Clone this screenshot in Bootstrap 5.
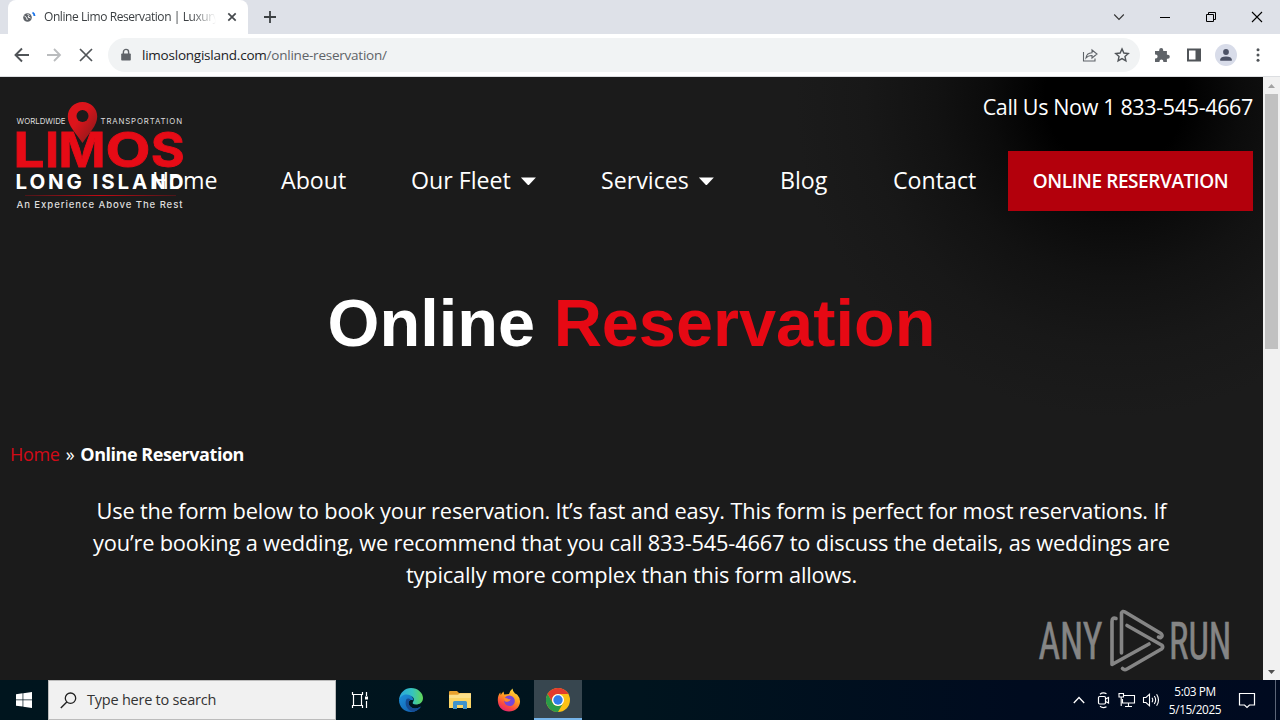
<!DOCTYPE html>
<html lang="en">
<head>
    <meta charset="UTF-8">
    <meta name="viewport" content="width=device-width, initial-scale=1.0">
    <title>Online Limo Reservation | Luxury</title>
    <link href="https://cdn.jsdelivr.net/npm/bootstrap@5.3.0/dist/css/bootstrap.min.css" rel="stylesheet">
    <style>
        body { width: 1280px; height: 720px; font-family: "Open Sans", sans-serif; }
        svg { display: block; flex: none; }

        /* browser */
        .tab-strip { height: 34px; background: #dee1e8; padding-left: 8px; }
        .browser-tab { width: 240px; height: 34px; background: #fff; border-radius: 8px 8px 0 0; padding: 0 9px 0 14px; margin-right: 15px; font-size: 12px; letter-spacing: -.42px; color: #3c4043; }
        .tab-title { width: 172px; margin-left: 7px; -webkit-mask-image: linear-gradient(90deg, #000 85%, transparent); mask-image: linear-gradient(90deg, #000 85%, transparent); }
        .window-buttons { gap: 32px; padding-right: 16px; }
        .toolbar { height: 43px; border-bottom: 1px solid #dcdee1; padding: 0 13px; }
        .forward-icon { margin-left: 15px; }
        .address-bar { width: 1032px; height: 34px; background: #f1f3f4; border-radius: 17px; margin-left: 14px; padding: 0 10px 0 12px; font-size: 13.5px; letter-spacing: -.23px; color: #202124; }
        .address-bar .url { margin-left: 10px; }
        .address-bar .url-path { color: #5f6368; }
        .toolbar-actions { gap: 14px; margin-left: 13px; }
        .side-panel { margin-left: 1px; margin-right: -1px; }
        .avatar { width: 22px; height: 22px; background: #d8dce9; }
        .menu-dots { margin-left: 4px; }

        /* page */
        .viewport-area { height: 603px; background: #1b1b1b; }
        .site { width: 1263px; color: #fff; background: radial-gradient(circle at 1115px 20px, #000 0, #000 70px, #0b0b0b 125px, #121212 180px, #181818 250px, #1b1b1b 320px); }
        .site-header { padding: 13px 10px 0 16px; height: 160px; }
        .logo { margin-top: 11px; }
        .header-side { margin-left: -32px; }
        .phone { font-size: 21.5px; line-height: 34px; letter-spacing: -.35px; }
        .main-menu { grid-template-columns: 129px 130px 190px 179px 113px 115px 245px; margin-top: 27px; height: 60px; font-size: 23.2px; }
        .main-menu a { color: #fff; text-decoration: none; padding-bottom: 2px; }
        .caret { width: 15px; height: 8px; background: #fff; clip-path: polygon(0 0, 100% 0, 50% 100%); margin-left: 10px; margin-top: 3px; }
        .main-menu .btn-reserve { background: #b3000c; height: 60px; padding-bottom: 0; font-size: 19px; font-weight: 600; letter-spacing: -.42px; }
        .hero-title { font: bold 66.7px/80px "Liberation Sans", sans-serif; margin: 46px 0 0; }
        .brand-red { color: #e60914; }
        .crumbs { margin: 76px 0 0 10px; gap: 6px; font-size: 18px; line-height: 30px; letter-spacing: -.3px; }
        .crumbs a { color: #d20a17; text-decoration: none; }
        .crumbs strong { letter-spacing: -.46px; }
        .intro { margin: 26px 0 0; font-size: 21.8px; line-height: 32px; letter-spacing: -.18px; }
        .scroll-track { width: 17px; background: #f1f1f1; padding: 7px 0 6px; }
        .scroll-thumb { width: 13px; height: 255px; background: #c1c1c1; margin-top: 6px; }
        .watermark { position: absolute; right: 48px; top: 608px; }

        /* taskbar */
        .taskbar { height: 40px; background: linear-gradient(90deg, #00151e 0, #00141e 50%, #000b1f 80%, #000a20 100%); color: #fff; }
        .start-button { width: 48px; }
        .search-box { width: 288px; background: #f1f1f1; border: 1px solid #bcbcbc; padding-left: 11px; gap: 10px; font-size: 14.5px; letter-spacing: -.23px; color: #333; }
        .task-view { width: 48px; margin-right: 2px; }
        .task-item { width: 49px; }
        .task-item.is-open { width: 48px; margin-left: 1px; background: #37464f; border-bottom: 2px solid #76b5ea; padding-top: 2px; }
        .tray-camera { margin-left: 12px; }
        .tray-network { margin-left: 7px; }
        .tray-sound { margin-left: 6px; }
        .clock { width: 60px; margin-left: 5px; font-size: 11.8px; line-height: 18px; letter-spacing: -.4px; }
        .notifications { margin: 0 19px 0 13px; }
        .show-desktop { width: 5px; border-left: 1px solid #5c6577; }
    </style>
</head>
<body class="overflow-hidden position-relative">
    <div class="tab-strip d-flex align-items-center">
        <div class="browser-tab d-flex align-items-center">
            <svg width="15" height="14" viewBox="0 0 15 14">
                <circle cx="5.500" cy="7.500" r="4.300" fill="#5f6368"/>
                <path d="M2.500 6l2 1.500.8 2.500M5.500 4l1.500 1.500-1 1.500 2.500 1" stroke="#fff" stroke-width="1" fill="none"/>
                <path d="M10.500 2.500q2 1 2 3.500" stroke="#1a73e8" stroke-width="1.900" fill="none"/>
            </svg>
            <div class="tab-title text-nowrap overflow-hidden">Online Limo Reservation | Luxury</div>
            <svg class="ms-auto" width="14" height="14" viewBox="0 0 14 14"><path d="M3.300 3.300l7.400 7.400M10.700 3.300l-7.400 7.400" stroke="#45494d" stroke-width="1.700"/></svg>
        </div>
        <svg width="14" height="14" viewBox="0 0 14 14"><path d="M7 1v12M1 7h12" stroke="#3c4043" stroke-width="1.800"/></svg>
        <div class="window-buttons d-flex align-items-center ms-auto">
            <svg width="14" height="14" viewBox="0 0 14 14"><path d="M2.200 4.500L7 9.500l4.800-5" stroke="#333" stroke-width="1.100" fill="none"/></svg>
            <svg width="14" height="14" viewBox="0 0 14 14"><path d="M2 7.500h10" stroke="#000"/></svg>
            <svg width="14" height="14" viewBox="0 0 14 14"><path d="M2.500 4.500h7v7h-7zM4.500 4.500V2.500h7v7h-2" stroke="#000" fill="none"/></svg>
            <svg width="14" height="14" viewBox="0 0 14 14"><path d="M2 2l10 10M12 2L2 12" stroke="#000" stroke-width="1.100"/></svg>
        </div>
    </div>

    <div class="toolbar d-flex align-items-center bg-white">
        <svg width="18" height="18" viewBox="0 0 18 18"><path d="M16 9H3M9 2.500L2.500 9 9 15.500" stroke="#505458" stroke-width="1.900" fill="none"/></svg>
        <svg class="forward-icon" width="16" height="16" viewBox="0 0 16 16"><path d="M1 8h13M8 2l6 6-6 6" stroke="#babcbe" stroke-width="1.800" fill="none"/></svg>
        <svg class="ms-3" width="16" height="16" viewBox="0 0 16 16"><path d="M2 2l12 12M14 2L2 14" stroke="#505458" stroke-width="1.700"/></svg>
        <div class="address-bar d-flex align-items-center">
            <svg width="12" height="14" viewBox="0 0 12 14"><path d="M2 5.500h8q.8 0 .8.8v5.400q0 .8-.8.8H2q-.8 0-.8-.8V6.300q0-.8.8-.8z" fill="#5f6368"/><path d="M3.400 6V4a2.600 2.600 0 0 1 5.200 0v2" stroke="#5f6368" stroke-width="1.400" fill="none"/></svg>
            <div class="url">limoslongisland.com<span class="url-path">/online-reservation/</span></div>
            <svg class="ms-auto me-3" width="16" height="16" viewBox="0 0 16 16"><path d="M1.500 5v9h11.500v-2.500M4 11q.5-5 6-5.300V3l5 4-5 4V8.500Q6 8.500 4 11z" stroke="#5f6368" stroke-width="1.100" fill="none"/></svg>
            <svg width="16" height="16" viewBox="0 0 16 16"><path d="M8 1.900l1.850 4.100 4.450.45-3.350 3 .95 4.400L8 11.600l-3.900 2.250.95-4.400-3.350-3L6.150 6z" stroke="#505458" stroke-width="1.400" fill="none"/></svg>
        </div>
        <div class="toolbar-actions d-flex align-items-center">
            <svg width="18" height="18" viewBox="0 0 18 18"><path d="M2 5h4.200V4a2 2 0 0 1 4 0v1h3.700v3.700h.9a2 2 0 0 1 0 4h-.9V16h-3.600v-.7a1.900 1.900 0 0 0-3.800 0v.7H2v-3.600h.7a1.900 1.900 0 0 0 0-3.800H2z" fill="#5f6368"/></svg>
            <svg class="side-panel" width="16" height="16" viewBox="0 0 16 16"><path d="M2 2.500h12v11H2z" stroke="#505458" stroke-width="2" fill="none"/><path d="M9.500 2h4.500v12H9.500z" fill="#505458"/></svg>
            <div class="avatar rounded-circle d-flex align-items-center justify-content-center">
                <svg width="14" height="14" viewBox="0 0 14 14"><circle cx="7" cy="4" r="2.900" fill="#4c5266"/><path d="M1.200 12.800v-1.300Q1.500 8.500 7 8.500t5.800 3v1.300z" fill="#4c5266"/></svg>
            </div>
            <svg class="menu-dots" width="6" height="16" viewBox="0 0 6 16" fill="#505458"><circle cx="3" cy="2.800" r="1.500"/><circle cx="3" cy="8" r="1.500"/><circle cx="3" cy="13.200" r="1.500"/></svg>
        </div>
    </div>

    <div class="viewport-area d-flex">
        <main class="site">
            <header class="site-header d-flex">
                <svg class="logo" width="168" height="110" viewBox="16 101 168 110" font-family="Inter, sans-serif">
                    <defs>
                        <linearGradient id="pinShade" x1="0" y1="0" x2="1" y2="1"><stop offset=".4" stop-color="#dc141b"/><stop offset="1" stop-color="#7c1a1b"/></linearGradient>
                        <linearGradient id="ruleFade"><stop offset="0" stop-color="#c00a14" stop-opacity=".3"/><stop offset=".5" stop-color="#c00a14"/><stop offset="1" stop-color="#c00a14" stop-opacity=".3"/></linearGradient>
                    </defs>
                    <text x="16.500" y="124" font-size="7.800" fill="#ddd" textLength="49" lengthAdjust="spacingAndGlyphs">WORLDWIDE</text>
                    <text x="100.500" y="124" font-size="7.800" fill="#ddd" textLength="81.500">TRANSPORTATION</text>
                    <g font-size="48" font-weight="700" fill="#e60b16" stroke="#e60b16" stroke-width=".8">
                        <text x="13.500" y="166.500" textLength="31" lengthAdjust="spacingAndGlyphs">L</text>
                        <text x="45" y="166.500">I</text>
                        <text x="58.500" y="166.500" textLength="47" lengthAdjust="spacingAndGlyphs">M</text>
                        <text x="105.500" y="166.500" textLength="45" lengthAdjust="spacingAndGlyphs">O</text>
                        <text x="150.800" y="166.500" textLength="34" lengthAdjust="spacingAndGlyphs">S</text>
                    </g>
                    <path d="M82.500 102c-8.500 0-14.700 6.500-14.700 14.500 0 9.500 8.200 16.500 14.700 26.500 6.500-10 14.700-17 14.700-26.500 0-8-6.200-14.500-14.700-14.500z" fill="url(#pinShade)"/>
                    <circle cx="82.500" cy="116" r="6" fill="#1b1b1b"/>
                    <text x="15.500" y="188.500" font-size="20.500" font-weight="700" fill="#fff" textLength="168">LONG ISLAND</text>
                    <rect x="25" y="195" width="151" height="1" fill="url(#ruleFade)"/>
                    <text x="16.500" y="208" font-size="9.600" font-weight="500" fill="#ddd" textLength="166">An Experience Above The Rest</text>
                </svg>
                <div class="header-side flex-grow-1">
                    <div class="phone text-end">Call Us Now 1 833-545-4667</div>
                    <nav class="main-menu d-grid align-items-center">
                        <a href="#">Home</a>
                        <a href="#">About</a>
                        <a href="#" class="d-flex align-items-center">Our Fleet<span class="caret"></span></a>
                        <a href="#" class="d-flex align-items-center">Services<span class="caret"></span></a>
                        <a href="#">Blog</a>
                        <a href="#">Contact</a>
                        <a href="#" class="btn-reserve d-flex align-items-center justify-content-center">ONLINE RESERVATION</a>
                    </nav>
                </div>
            </header>

            <h1 class="hero-title text-center">Online <span class="brand-red">Reservation</span></h1>
            <div class="crumbs d-flex"><a href="#">Home</a><span>»</span><strong>Online Reservation</strong></div>
            <p class="intro text-center text-nowrap">Use the form below to book your reservation. It’s fast and easy. This form is perfect for most reservations. If<br>you’re booking a wedding, we recommend that you call 833-545-4667 to discuss the details, as weddings are<br>typically more complex than this form allows.</p>
        </main>
        <div class="scroll-track d-flex flex-column align-items-center">
            <svg width="7" height="4" viewBox="0 0 7 4"><path d="M0 4l3.500-4L7 4z" fill="#a3a3a3"/></svg>
            <div class="scroll-thumb"></div>
            <svg class="mt-auto" width="7" height="4" viewBox="0 0 7 4"><path d="M0 0l3.500 4L7 0z" fill="#505050"/></svg>
        </div>
    </div>

    <svg class="watermark" width="194" height="66" viewBox="1038 608 194 66" fill="#858585" font-family="'Roboto Condensed', Roboto, sans-serif" font-size="51.500">
        <g stroke="#858585" stroke-width=".6">
            <text x="1038.500" y="659" textLength="64" lengthAdjust="spacingAndGlyphs">ANY</text>
            <text x="1169" y="659" textLength="62.500" lengthAdjust="spacingAndGlyphs">RUN</text>
        </g>
        <g fill="none" stroke="#858585" stroke-width="3.600" stroke-linecap="round" stroke-linejoin="round">
            <path d="M1116 618.500q-4-1.500-4 3v43L1149 644"/>
            <path d="M1121.500 653v-40q1-2.500 3.500-1l36 21.500q2.500 2.500-.5 4.300l-2-.8"/>
            <path d="M1127 625.500l34.500 19.500q2.500 2 0 4l-34.500 20q-2.500 1.500-4.500-.5"/>
        </g>
    </svg>

    <footer class="taskbar d-flex">
        <div class="start-button d-flex align-items-center justify-content-center">
            <svg width="16" height="16" viewBox="0 0 16 16"><path d="M0 2.200l6.600-.9v6.200H0zM7.300 1.200L16 0v7.500H7.300zM0 8.300h6.600v6.300L0 13.700zM7.300 8.300H16V16l-8.700-1.300z" fill="#fff"/></svg>
        </div>
        <div class="search-box d-flex align-items-center">
            <svg width="17" height="17" viewBox="0 0 17 17"><circle cx="10.500" cy="6.200" r="5.200" stroke="#222" stroke-width="1.300" fill="none"/><path d="M6.800 10L.8 16" stroke="#222" stroke-width="1.400"/></svg>
            <span>Type here to search</span>
        </div>
        <div class="task-view d-flex align-items-center justify-content-center">
            <svg width="18" height="18" viewBox="0 0 18 18"><path d="M1.500 1v2.500h10V1M1.500 17v-2.500h10V17M2.500 3.500v11M10.500 3.500v11M15.500 1v4M15.500 10v7" stroke="#fff" stroke-width="1.200" fill="none"/><path d="M14 5.500h3v3h-3z" fill="#fff"/></svg>
        </div>
        <div class="task-item d-flex align-items-center justify-content-center">
            <svg width="24" height="24" viewBox="0 0 24 24">
                <defs>
                    <linearGradient id="edgeTop" x1="0" x2="1"><stop offset="0" stop-color="#2aa5dd"/><stop offset=".55" stop-color="#35c3c0"/><stop offset="1" stop-color="#62d755"/></linearGradient>
                    <linearGradient id="edgeLow" x1="0" y1="0" x2="1" y2="1"><stop offset="0" stop-color="#1c8fda"/><stop offset="1" stop-color="#1158a8"/></linearGradient>
                </defs>
                <path d="M0 11.500C1 4.500 6 0 12 0c7 0 12 5 12 10 0 4.500-3.500 6.500-7 6.500-3 0-4-1-3-2.500 2-2.500.5-6-3.500-6C6 8 2 9 0 11.500z" fill="url(#edgeTop)"/>
                <path d="M0 12c1.500-5 7-6.500 10.500-5 3 1.200 4 3.500 3.800 5.500-3-1.500-5.500 1-4.500 4 1.300 3.800 7 5.500 12.200 2C19.500 22 16.500 24 12 24 5 24 0 18.500 0 12z" fill="url(#edgeLow)"/>
                <path d="M7.500 11c-2.500 5 .5 11.500 6.500 12.800 3.500-.6 6.200-2.500 8-5.300-5.200 3.500-10.900 1.800-12.200-2-.7-2.200.3-4 2-4.700-1.300-1.300-3-1.800-4.300-.8z" fill="#164b92"/>
            </svg>
        </div>
        <div class="task-item d-flex align-items-center justify-content-center">
            <svg width="22" height="20" viewBox="0 0 22 20"><path d="M0 2q0-1 1-1h7l2 2h11q1 0 1 1v14H0z" fill="#e8a22e"/><path d="M0 5h22v13H0z" fill="#fbd565"/><path d="M0 4.800h9l2-1.600h11V8H0z" fill="#fce08a"/><path d="M4 19v-6.500q0-1.500 1.500-1.500h11q1.500 0 1.500 1.500V19h-4v-4H8v4z" fill="#3f93cc"/></svg>
        </div>
        <div class="task-item d-flex align-items-center justify-content-center">
            <svg width="24" height="24" viewBox="0 0 24 24">
                <defs><linearGradient id="foxFire" x1=".8" y1="0" x2=".3" y2="1"><stop offset="0" stop-color="#ffe23f"/><stop offset=".45" stop-color="#ff9a20"/><stop offset=".75" stop-color="#fb4b3f"/><stop offset="1" stop-color="#e42271"/></linearGradient></defs>
                <path d="M1 14C.3 9.500 1.500 6.500 3.300 4.500L3.800 7Q4.500 5 6.500 3.500L7.200 6.500Q10 6 12 6q1-3.500 3.500-5.500.2 3 2.500 5 2 .6 2.500 1.500 2.800 3 2.500 7c-.3 5.500-5 9.500-11 9.500S1.500 19.500 1 14z" fill="url(#foxFire)"/>
                <path d="M8 9.500q2-2.300 5.500-1.800 4.300 1.300 4.300 5.300c0 3-2.300 5.200-5.500 5-3.300-.2-5.300-2.500-5-5.200 2 1.500 4.500.8 5.700-.8-2.500.2-4.500-.8-5-2.500z" fill="#7646d8"/>
                <path d="M7 10q3-.3 4.500 1.200h2.300Q12 14.500 8 13.200z" fill="#ff8a2b"/>
            </svg>
        </div>
        <div class="task-item is-open d-flex align-items-center justify-content-center">
            <svg width="24" height="24" viewBox="0 0 24 24">
                <circle cx="12" cy="12" r="12" fill="#fbc116"/>
                <path d="M1.600 6A12 12 0 0 1 22.400 6H12a6 6 0 0 0-5.200 9z" fill="#e33b2e"/>
                <path d="M1.600 6A12 12 0 0 0 12 24l5.200-9A6 6 0 0 1 6.800 15z" fill="#2a9b48"/>
                <circle cx="12" cy="12" r="6" fill="#fff"/><circle cx="12" cy="12" r="4.700" fill="#2f7de9"/>
            </svg>
        </div>
        <div class="d-flex align-items-center ms-auto">
            <svg width="12" height="8" viewBox="0 0 12 8"><path d="M.8 7L6 1.500 11.200 7" stroke="#fff" stroke-width="1.300" fill="none"/></svg>
            <svg class="tray-camera" width="14" height="18" viewBox="0 0 14 18" stroke="#fff" stroke-width="1.200" fill="none"><rect x="1.500" y="5.500" width="7" height="7.500" rx="1.200"/><path d="M8.500 8l3-1.500v5.500l-3-1.500M3 3.200Q6 .8 9.500 2.800M3 15.300q3 2.400 6.500.4"/></svg>
            <svg class="tray-network" width="18" height="16" viewBox="0 0 18 16" stroke="#fff" stroke-width="1.100" fill="none"><path d="M6 3.500h10.500v7.500H4.500V7M10.500 11v3.500M7 14.500h7M1 1.500h4.500v3.500H1zM3.200 5v9"/></svg>
            <svg class="tray-sound" width="18" height="16" viewBox="0 0 18 16" stroke="#fff" stroke-width="1.100" fill="none"><path d="M1.500 5.500H4L7.500 2.200v11.600L4 10.500H1.500zM10 5.800q1.500 2.200 0 4.400M12.300 4q2.700 4 0 8M14.600 2.200q3.800 5.800 0 11.600"/></svg>
            <div class="clock text-center">5:03 PM<br>5/15/2025</div>
            <svg class="notifications" width="18" height="18" viewBox="0 0 18 18"><path d="M1.500 2.500h15v11.500h-5L9 16.500 6.500 14h-5z" stroke="#fff" stroke-width="1.200" fill="none"/></svg>
        </div>
        <div class="show-desktop"></div>
    </footer>
    <script src="https://cdn.jsdelivr.net/npm/bootstrap@5.3.0/dist/js/bootstrap.bundle.min.js"></script>
</body>
</html>
